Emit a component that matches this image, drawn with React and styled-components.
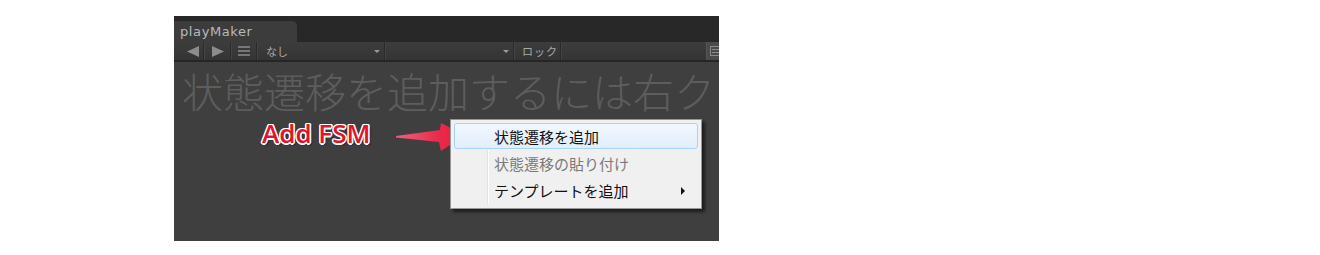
import React from "react";
import styled, { createGlobalStyle } from "styled-components";

const GlobalStyle = createGlobalStyle`
  body {
    margin: 0;
    background: #ffffff;
    font-family: "Noto Sans", "Noto Sans CJK JP", sans-serif;
  }
`;

const Page = styled.div`
  padding: 16px 0 0 174px;
`;

const Panel = styled.div`
  width: 545px;
  height: 225px;
  display: flex;
  flex-direction: column;
  background: #3f3f3f;
  overflow: hidden;
`;

const TabBar = styled.div`
  height: 26px;
  background: #282828;
  display: flex;
  align-items: flex-end;
`;

const Tab = styled.div`
  width: 123px;
  height: 21px;
  background: #3c3c3c;
  border-radius: 0 5px 0 0;
  color: #b9b9b9;
  font-family: "DejaVu Sans", "Noto Sans", sans-serif;
  font-size: 13px;
  letter-spacing: 0.6px;
  padding-left: 6px;
  box-sizing: border-box;
  line-height: 22px;
`;

const Toolbar = styled.div`
  height: 18px;
  background: linear-gradient(#3d3d3d, #343434);
  border-bottom: 2px solid #262626;
  display: flex;
  align-items: stretch;
  padding-left: 9px;
  color: #a8a8a8;
`;

const ToolButton = styled.div`
  width: ${(p) => p.w}px;
  display: flex;
  align-items: center;
  justify-content: center;
  border-right: 1px solid #2a2a2a;
  box-shadow: 1px 0 0 #444;
  margin-right: 1px;
`;

const Dropdown = styled.div`
  width: ${(p) => p.w}px;
  display: flex;
  align-items: center;
  justify-content: space-between;
  padding: 0 4px 0 8px;
  box-sizing: border-box;
  border-right: 1px solid #2a2a2a;
  box-shadow: 1px 0 0 #444;
  margin-right: 1px;
  font-family: "Noto Sans CJK JP", sans-serif;
  font-size: 11px;
  color: #a9a9a9;
`;

const Caret = styled.span`
  width: 0;
  height: 0;
  border-left: 3px solid transparent;
  border-right: 3px solid transparent;
  border-top: 3px solid #9a9a9a;
`;

const LockLabel = styled.div`
  width: 46px;
  display: flex;
  align-items: center;
  padding-left: 7px;
  box-sizing: border-box;
  border-right: 1px solid #2a2a2a;
  box-shadow: 1px 0 0 #444;
  font-family: "Noto Sans CJK JP", sans-serif;
  font-size: 11px;
  color: #a9a9a9;
  letter-spacing: 1px;
`;

const Spacer = styled.div`
  flex: 1;
`;

const EndButton = styled.div`
  width: 12px;
  background: #4a4a4a;
  border-left: 1px solid #555;
  display: flex;
  align-items: center;
  justify-content: flex-end;
`;

const Content = styled.div`
  position: relative;
  flex: 1;
`;

const Hint = styled.div`
  margin: 7px 0 0 8px;
  font-family: "Noto Sans CJK JP", sans-serif;
  font-weight: 300;
  font-size: 41px;
  line-height: 42px;
  color: #5d5d5d;
  white-space: nowrap;
`;

const Callout = styled.div`
  position: absolute;
  left: 88px;
  top: 57px;
  font-family: "Open Sans", "Liberation Sans", sans-serif;
  font-weight: 600;
  font-size: 26px;
  line-height: 28px;
  color: #e5132a;
  text-shadow: -1.5px 0 #fff, 1.5px 0 #fff, 0 -1.5px #fff, 0 1.5px #fff,
    -1px -1px #fff, 1px 1px #fff, -1px 1px #fff, 1px -1px #fff,
    2px 2px 2px rgba(0, 0, 0, 0.5);
`;

const Arrow = styled.svg`
  position: absolute;
  left: 220px;
  top: 58px;
`;

const Menu = styled.div`
  position: absolute;
  left: 276px;
  top: 57px;
  width: 252px;
  box-sizing: border-box;
  padding: 3px 3px 5px;
  background: #f0f0f0;
  border: 1px solid #979797;
  box-shadow: 3px 3px 3px rgba(0, 0, 0, 0.55);
  display: flex;
  flex-direction: column;
  gap: 1px;
`;

const Item = styled.div`
  position: relative;
  height: 26px;
  box-sizing: border-box;
  display: flex;
  align-items: center;
  padding-left: 39px;
  font-family: "Noto Sans CJK JP", sans-serif;
  font-size: 15px;
  color: ${(p) => (p.disabled ? "#7a7a7a" : "#111")};
  border: 1px solid ${(p) => (p.active ? "#a9d3f5" : "transparent")};
  border-radius: 3px;
  background: ${(p) =>
    p.active ? "linear-gradient(#f1f7fe, #e2eefc)" : "transparent"};
  &::before {
    content: "";
    position: absolute;
    left: 32px;
    top: -1px;
    bottom: -2px;
    width: 1px;
    background: #e2e3e3;
    box-shadow: 1px 0 0 #fff;
    display: ${(p) => (p.active ? "none" : "block")};
  }
`;

const SubArrow = styled.span`
  position: absolute;
  right: 12px;
  top: 9px;
  width: 0;
  height: 0;
  border-top: 4px solid transparent;
  border-bottom: 4px solid transparent;
  border-left: 4px solid #111;
`;

const App = () => {
  return (
    <Page>
      <GlobalStyle />
      <Panel>
        <TabBar>
          <Tab>playMaker</Tab>
        </TabBar>
        <Toolbar>
          <ToolButton w={20}>
            <svg width="12" height="11" viewBox="0 0 12 11">
              <path d="M12 0 L0 5.5 L12 11 Z" fill="#8c8c8c" />
            </svg>
          </ToolButton>
          <ToolButton w={25}>
            <svg width="12" height="11" viewBox="0 0 12 11">
              <path d="M0 0 L12 5.5 L0 11 Z" fill="#8c8c8c" />
            </svg>
          </ToolButton>
          <ToolButton w={24}>
            <svg width="12" height="10" viewBox="0 0 12 10">
              <path d="M0 1 H12 M0 5 H12 M0 9 H12" stroke="#8c8c8c" strokeWidth="1.3" />
            </svg>
          </ToolButton>
          <Dropdown w={127}>
            なし
            <Caret />
          </Dropdown>
          <Dropdown w={128}>
            <span />
            <Caret />
          </Dropdown>
          <LockLabel>ロック</LockLabel>
          <Spacer />
          <EndButton>
            <svg width="9" height="10" viewBox="0 0 9 10">
              <rect x="0.5" y="0.5" width="9" height="9" fill="none" stroke="#8a8a8a" />
              <path d="M2 3.5 H9 M2 6.5 H9" stroke="#8a8a8a" />
            </svg>
          </EndButton>
        </Toolbar>
        <Content>
          <Hint>状態遷移を追加するには右クリック</Hint>
          <Callout>Add FSM</Callout>
          <Arrow width="72" height="34" viewBox="0 0 72 34">
            <defs>
              <linearGradient id="ag" x1="0" y1="0" x2="1" y2="0">
                <stop offset="0" stopColor="#f0607e" />
                <stop offset="0.6" stopColor="#ea2b4c" />
                <stop offset="1" stopColor="#e81c3c" />
              </linearGradient>
            </defs>
            <path
              d="M2 16 L46 10 L47 3 L71 15 L47 31 L45 22 L2 17.5 Z"
              fill="url(#ag)"
            />
          </Arrow>
          <Menu>
            <Item active>状態遷移を追加</Item>
            <Item disabled>状態遷移の貼り付け</Item>
            <Item>
              テンプレートを追加
              <SubArrow />
            </Item>
          </Menu>
        </Content>
      </Panel>
    </Page>
  );
};

export default App;
